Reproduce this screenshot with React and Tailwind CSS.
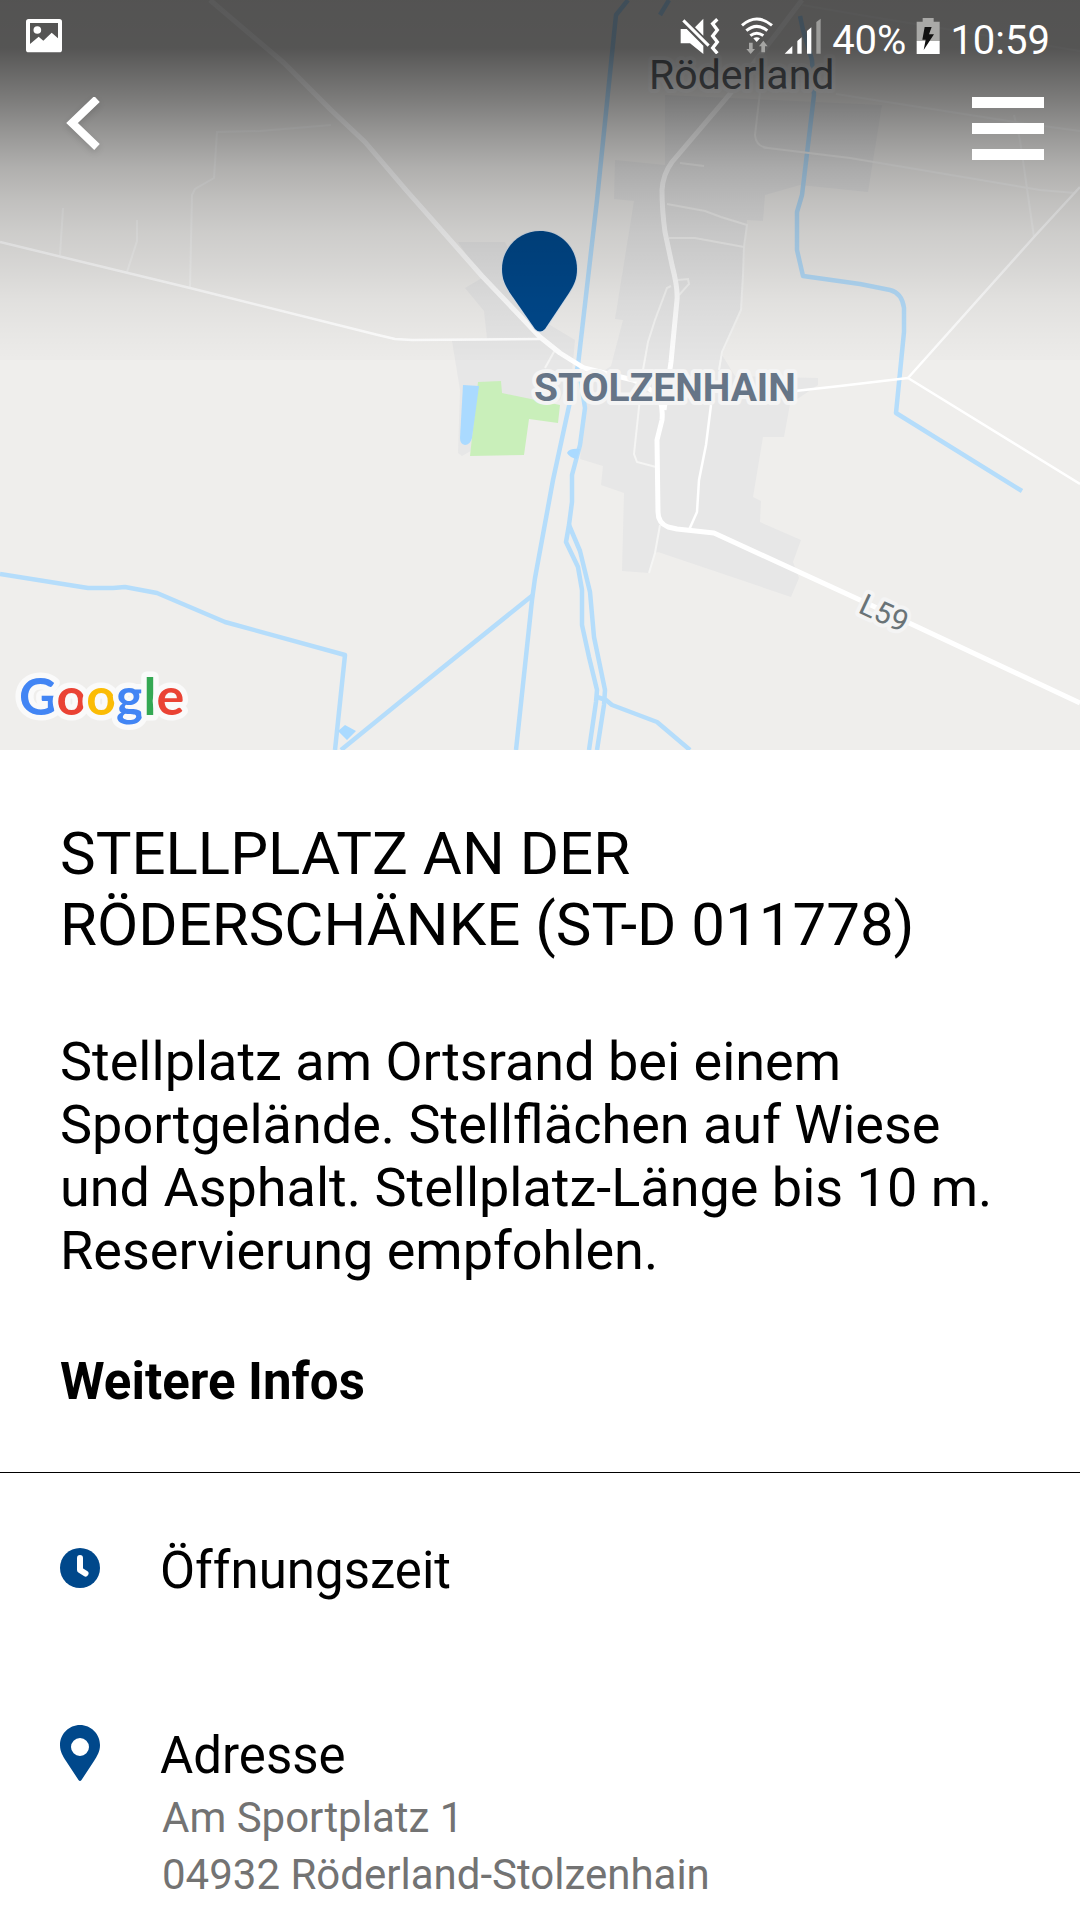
const WATER = [
  "M628 0L616 15L597 200L578 365L566 420L553 480L535 578L532 600L516 750",
  "M579 370L585 408L580 445L572 475L572 502L569 525L566 542L578 567L582 590L582 625L589 657L597 690L596 702L589 750",
  "M569 525L580 551L590 592L594 637L605 690L604 705L597 750",
  "M597 697L606 700L612 705L657 722L690 750",
  "M533 595L400 702L341 750",
  "M0 574L88 588H113L125 587L157 593L225 622L345 655L335 750",
  "M800 16L803 30L812 60L814 95L802 195L797 212L797 250L803 276L860 284L890 290Q902 293 904 308L904 332L896 413L1022 491",
  "M669 0L660 15",
];

const LANES = [
  "M63 208L60 255",
  "M137 220V241L127 272",
  "M331 125L260 131L217 132L214 178L195 189L192 195L190 287",
  "M836 94L1015 122L1080 131",
  "M760 92L755 135Q756 147 768 148L850 158L1040 190L1075 193",
  "M802 5L860 15L1080 51",
  "M667 204L705 211L721 217L747 225L744 247L743 275L741 310L722 352L719 370",
  "M669 238L695 238L744 247",
  "M680 163L704 166",
  "M1034 237L1020 140L1014 115",
  "M678 280L688 279L689 284L679 295M671 286L667 288L655 320L648 342L643 370L634 454L637 462L656 467",
  "M660 525L655 553L649 573",
  "M555 350L545 368",
];

const ROADS = [
  "M0 242L190 288L378 335L395 339L412 340L540 339",
  "M1080 187L1034 237L908 378",
  "M795 391L840 386L908 378L1080 484",
  "M711 405L706 445L699 480L697 512L689 530",
];

function Map() {
  return (
    <svg viewBox="0 0 1080 750" className="block w-full" role="img" aria-label="Karte">
      <rect width="1080" height="750" fill="#efeeec" />

      <g fill="#e7e7e7">
        <path d="M665 95L882 105L868 192L800 185L765 195L763 221L747 220L743 275L741 310L722 355L735 376L818 378V385L790 404L784 437H763L753 497L761 501L760 522L801 540L793 562L799 578L791 597L658 552L655 553L649 573L622 571L624 493L601 485L603 466L580 459L584 415L590 380L611 366L623 320L615 319L634 201L614 199L615 160L665 165Z" />
        <path d="M458 242H505L545 322L575 340L572 372L560 400L462 456L458 453L460 390L452 341L487 338L484 311L465 288L482 278Z" />
      </g>
      <path d="M478 382L501 381L502 393L560 405L558 423L529 419L524 455L470 456Z" fill="#c9efba" />
      <path d="M463 385L479 386L472 438Q470 445 465 445Q460 444 460 438Z" fill="#aadaff" />

      <g fill="none" stroke="#b5ddfb" strokeWidth="4.5" strokeLinejoin="round">
        {WATER.map((d) => (
          <path key={d} d={d} />
        ))}
      </g>
      <path d="M338 731L345 725L356 731L347 740ZM567 453Q569 448 580 449L577 459Q570 458 567 453Z" fill="#aadaff" />

      <g fill="none" stroke="#f5f5f4" strokeWidth="2">
        {LANES.map((d) => (
          <path key={d} d={d} />
        ))}
      </g>
      <g fill="none" stroke="#fff" strokeWidth="2.5" strokeLinejoin="round">
        {ROADS.map((d) => (
          <path key={d} d={d} />
        ))}
      </g>
      <g fill="none" stroke="#fff" strokeWidth="5" strokeLinejoin="round">
        <path d="M210 0L284 63L331 110L365 142L406 190L482 276L540 337L560 353L584 368L633 380Q650 386 660 400Q663 408 662 420L657 440L658 512Q658 523 668 527L677 529L714 533L860 600L1080 703" />
        <path d="M802 0L777 33L729 95L672 162Q663 174 662 190Q662 210 665 232L672 265Q678 288 677 300L671 362L664 410" />
      </g>

      <g
        fontFamily="Roboto, sans-serif"
        stroke="#f4f4f4"
        strokeWidth="8"
        strokeLinejoin="round"
        paintOrder="stroke"
      >
        <text x="649" y="89" fontSize="41" fill="#5f6368">
          Röderland
        </text>
        <text x="534" y="401" fontSize="39" fontWeight="700" fill="#667587">
          STOLZENHAIN
        </text>
        <text x="857" y="612" fontSize="30" fill="#697377" transform="rotate(25 857 612)">
          L59
        </text>
      </g>

      <path
        d="M540 231C561 231 577 248 577 269C577 279 574 285 569 293L545 329Q540 334 535 329L510 293C505 285 502 279 502 269C502 248 519 231 540 231Z"
        fill="#00488b"
        stroke="#dde6f0"
        strokeWidth="2"
        paintOrder="stroke"
      />

      <text
        x="19"
        y="715"
        fontFamily="Lato, sans-serif"
        fontSize="52"
        fontWeight="700"
        stroke="#fafafa"
        strokeWidth="11"
        strokeLinejoin="round"
        paintOrder="stroke"
      >
        <tspan fill="#4285f4">G</tspan>
        <tspan fill="#ea4335">o</tspan>
        <tspan fill="#fbbc05">o</tspan>
        <tspan fill="#4285f4">g</tspan>
        <tspan fill="#34a853">l</tspan>
        <tspan fill="#ea4335">e</tspan>
      </text>
    </svg>
  );
}

function StatusBar() {
  return (
    <div className="flex h-[72px] items-baseline justify-between pt-[16px] pl-[26px] pr-[30px] text-white">
      <svg viewBox="78 54 108 108" className="w-[36px] h-[36px]" aria-hidden="true">
        <path
          fill="#fff"
          fillRule="evenodd"
          d="M86 57H178Q186 57 186 65V149Q186 157 178 157H86Q78 157 78 149V65Q78 57 86 57ZM90 69V132L116 110L130 122L155 98L174 115V69Z"
        />
        <circle cx="112" cy="90" r="11.500" fill="#fff" />
      </svg>

      <div className="flex items-baseline gap-[10px] text-[40px] leading-[48px]">
        <svg viewBox="118 48 120 114" className="mr-[10px] w-[40px] h-[38px]" aria-hidden="true">
          <path fill="#fff" d="M120 87H138L188 137V162L148 130H120ZM188 56V107L163 82Z" />
          <path d="M128 61L204 137" stroke="#fff" strokeWidth="9" />
          <path
            d="M230 58L216 71L230 90L216 108L230 126L216 144L230 160"
            fill="none"
            stroke="#fff"
            strokeWidth="10"
          />
        </svg>
        <svg viewBox="299 48 102 114" className="w-[34px] h-[38px]" aria-hidden="true">
          <g fill="none" stroke="#fff" strokeWidth="9">
            <path d="M305 76Q349 38 395 76" />
            <path d="M318 92Q349 66 381 92" />
            <path d="M330 107Q349 92 369 107" />
          </g>
          <path d="M339 115Q349 108 359 115L349 126Z" fill="#fff" />
          <path
            d="M326 128H337V147H344L331 162L318 147H326ZM363 157H374V139H382L369 122L356 139H363Z"
            fill="#a5a5a3"
          />
        </svg>
        <svg viewBox="434 48 114 114" className="w-[38px] h-[38px]" aria-hidden="true">
          <path d="M436 161L459 138V161ZM474 123L487 112V161H474ZM503 93L516 82V161H503Z" fill="#fff" />
          <path d="M531 66L544 56V161H531Z" fill="#9c9c9a" />
        </svg>
        <span>40%</span>
        <svg viewBox="826 48 72 114" className="w-[24px] h-[38px]" aria-hidden="true">
          <path d="M828 65H846V54H879V65H897V124H828Z" fill="#a9a9a7" />
          <path d="M828 123H897V162H828Z" fill="#fff" />
          <path d="M852 81H873L865 103H880L849 150L855 119H845Z" fill="#111" />
        </svg>
        <span>10:59</span>
      </div>
    </div>
  );
}

function NavBar() {
  return (
    <div className="flex items-start justify-between pt-[25px] pl-[64px] pr-[36px]">
      <button type="button" aria-label="Zurück">
        <svg viewBox="64 97 40 56" className="w-[40px] h-[56px] drop-shadow-md" aria-hidden="true">
          <path d="M97 99L72 123L97 147" fill="none" stroke="#fff" strokeWidth="8" />
        </svg>
      </button>
      <button type="button" aria-label="Menü" className="flex w-[72px] flex-col gap-[15px]">
        <span className="h-[11px] w-full bg-white" />
        <span className="h-[11px] w-full bg-white" />
        <span className="h-[11px] w-full bg-white" />
      </button>
    </div>
  );
}

function ClockIcon() {
  return (
    <svg viewBox="0 0 40 40" className="w-[40px] h-[40px]" aria-hidden="true">
      <circle cx="20" cy="20" r="20" fill="#00488b" />
      <path
        d="M20 10V22L25.500 25.500"
        fill="none"
        stroke="#fff"
        strokeWidth="6"
        strokeLinecap="round"
        strokeLinejoin="round"
      />
    </svg>
  );
}

function PinIcon() {
  return (
    <svg viewBox="0 0 40 56" className="w-[40px] h-[56px] shrink-0" aria-hidden="true">
      <path
        fill="#00488b"
        fillRule="evenodd"
        d="M20 0C31 0 40 9 40 20C40 27 37 31 34 36L21.500 55Q20 57 18.500 55L6 36C3 31 0 27 0 20C0 9 9 0 20 0ZM20 13A9 9 0 1 0 20 31A9 9 0 1 0 20 13Z"
      />
    </svg>
  );
}

function InfoRow({ icon, title, children }) {
  return (
    <div className="flex gap-[60px]">
      <div className="flex h-[54px] w-[40px] shrink-0 items-center">{icon}</div>
      <div>
        <h3 className="text-[51px] leading-[60px]">{title}</h3>
        {children}
      </div>
    </div>
  );
}

export default function App() {
  return (
    <div className="min-h-screen bg-white font-['Roboto',sans-serif] text-black">
      <header className="relative">
        <Map />
        <div className="absolute inset-x-0 top-0 h-[360px] bg-[linear-gradient(to_bottom,rgba(0,0,0,0.65)_0px,rgba(0,0,0,0.645)_48px,rgba(0,0,0,0.58)_67px,rgba(0,0,0,0.48)_100px,rgba(0,0,0,0.37)_133px,rgba(0,0,0,0.265)_167px,rgba(0,0,0,0.195)_200px,rgba(0,0,0,0.14)_233px,rgba(0,0,0,0.1)_267px,rgba(0,0,0,0.06)_300px,rgba(0,0,0,0.03)_333px,rgba(0,0,0,0.012)_360px)]">
          <StatusBar />
          <NavBar />
        </div>
      </header>

      <main>
        <section className="border-b border-black px-[60px] pt-[68px] pb-[60px]">
          <h1 className="text-[60px] leading-[71px]">STELLPLATZ AN DER RÖDERSCHÄNKE (ST-D 011778)</h1>
          <p className="mt-[70px] text-[54px] leading-[63px]">
            Stellplatz am Ortsrand bei einem Sportgelände. Stellflächen auf Wiese und Asphalt.
            Stellplatz-Länge bis 10 m. Reservierung empfohlen.
          </p>
          <h2 className="mt-[70px] text-[51px] leading-[60px] font-bold">Weitere Infos</h2>
        </section>

        <section className="flex flex-col gap-[125px] px-[60px] pt-[68px] pb-[16px]">
          <InfoRow icon={<ClockIcon />} title="Öffnungszeit" />
          <InfoRow icon={<PinIcon />} title="Adresse">
            <address className="mt-[3px] pl-[2px] text-[42px] leading-[57px] text-[#737373] not-italic">
              Am Sportplatz 1
              <br />
              04932 Röderland-Stolzenhain
            </address>
          </InfoRow>
        </section>
      </main>
    </div>
  );
}
